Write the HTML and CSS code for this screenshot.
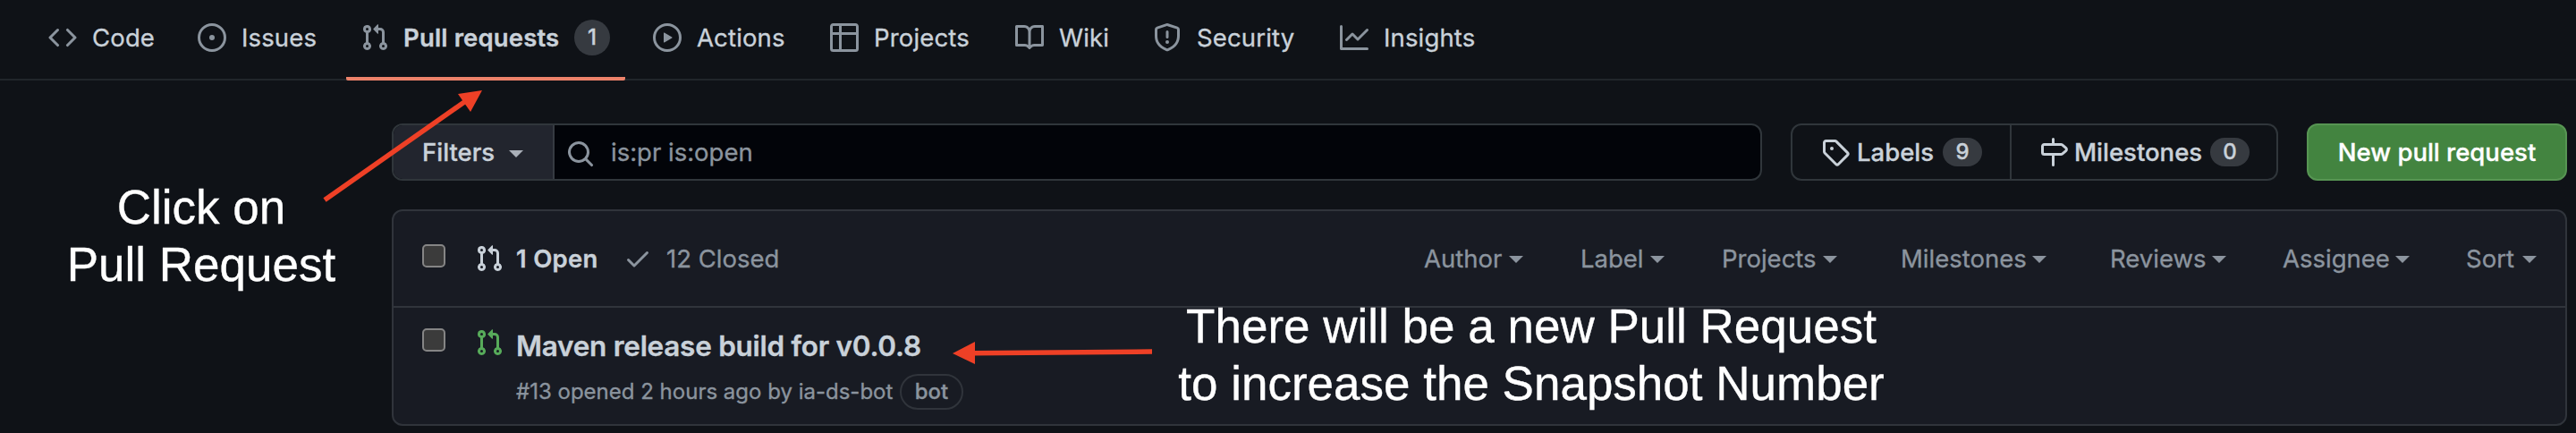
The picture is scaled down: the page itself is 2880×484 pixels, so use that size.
FILE: index.html
```html
<!DOCTYPE html>
<html lang="en">
<head>
<meta charset="utf-8">
<title>Pull requests</title>
<link rel="stylesheet" href="styles.css">
</head>
<body>
<svg class="defs" width="0" height="0" aria-hidden="true">
  <symbol id="pr" viewBox="0 0 16 16"><path fill-rule="evenodd" d="M7.177 3.073L9.573.677A.25.25 0 0110 .854v4.792a.25.25 0 01-.427.177L7.177 3.427a.25.25 0 010-.354zM3.75 2.5a.75.75 0 100 1.5.75.75 0 000-1.5zm-2.25.75a2.25 2.25 0 113 2.122v5.256a2.251 2.251 0 11-1.5 0V5.372A2.25 2.25 0 011.5 3.25zM11 2.5h-1V4h1a1 1 0 011 1v5.628a2.251 2.251 0 101.5 0V5A2.5 2.5 0 0011 2.5zm1 10.25a.75.75 0 111.5 0 .75.75 0 01-1.5 0zM3.75 12a.75.75 0 100 1.5.75.75 0 000-1.5z"/></symbol>
</svg>
<nav class="tabs">
  <a class="tab code"><svg class="icon" viewBox="0 0 16 16"><path fill-rule="evenodd" d="M4.72 3.22a.75.75 0 011.06 1.06L2.06 8l3.72 3.72a.75.75 0 11-1.06 1.06L.47 8.53a.75.75 0 010-1.06l4.25-4.25zm6.56 0a.75.75 0 10-1.06 1.06L13.94 8l-3.72 3.72a.75.75 0 101.06 1.06l4.25-4.25a.75.75 0 000-1.06l-4.25-4.25z"/></svg><span>Code</span></a>
  <a class="tab issues"><svg class="icon" viewBox="0 0 16 16"><path d="M8 9.5a1.5 1.5 0 100-3 1.5 1.5 0 000 3z"/><path fill-rule="evenodd" d="M8 0a8 8 0 100 16A8 8 0 008 0zM1.5 8a6.5 6.5 0 1113 0 6.5 6.5 0 01-13 0z"/></svg><span>Issues</span></a>
  <a class="tab pulls selected"><svg class="icon"><use href="#pr"/></svg><span>Pull requests</span><b class="count">1</b></a>
  <a class="tab actions"><svg class="icon" viewBox="0 0 16 16"><path fill-rule="evenodd" d="M1.5 8a6.5 6.5 0 1113 0 6.5 6.5 0 01-13 0zM8 0a8 8 0 100 16A8 8 0 008 0zM6.379 5.227A.25.25 0 006 5.442v5.117a.25.25 0 00.379.214l4.264-2.559a.25.25 0 000-.428L6.379 5.227z"/></svg><span>Actions</span></a>
  <a class="tab projects"><svg class="icon" viewBox="0 0 16 16"><path fill-rule="evenodd" d="M0 1.75C0 .784.784 0 1.75 0h12.5C15.216 0 16 .784 16 1.75v12.5A1.75 1.75 0 0114.25 16H1.75A1.75 1.75 0 010 14.250V1.75zM1.5 6.5v7.750c0 .138.112.250.250.250H5v-8H1.500zM5 5H1.500V1.750a.250.250 0 01.250-.250H5V5zm1.500 1.500v8h7.750a.250.250 0 00.250-.250V6.500h-8zm8-1.500h-8V1.500h7.750a.250.250 0 01.250.250V5z"/></svg><span>Projects</span></a>
  <a class="tab wiki"><svg class="icon" viewBox="0 0 16 16"><path fill-rule="evenodd" d="M0 1.750A.750.750 0 01.750 1h4.253c1.227 0 2.317.590 3 1.501A3.744 3.744 0 0111.006 1h4.245a.750.750 0 01.750.750v10.500a.750.750 0 01-.750.750h-4.507a2.250 2.250 0 00-1.591.659l-.622.621a.750.750 0 01-1.060 0l-.622-.621A2.250 2.250 0 005.258 13H.750a.750.750 0 01-.750-.750V1.750zm8.755 3a2.250 2.250 0 012.250-2.250H14.500v9h-3.757c-.710 0-1.400.201-1.992.572l.004-7.322zm-1.504 7.324l.004-5.073-.002-2.253A2.250 2.250 0 005.003 2.500H1.500v9h3.757a3.750 3.750 0 011.994.574z"/></svg><span>Wiki</span></a>
  <a class="tab security"><svg class="icon" viewBox="0 0 16 16"><path fill-rule="evenodd" d="M7.467.133a1.750 1.750 0 011.066 0l5.250 1.680A1.750 1.750 0 0115 3.480V7c0 1.566-.320 3.182-1.303 4.682-.983 1.498-2.585 2.813-5.032 3.855a1.700 1.700 0 01-1.330 0c-2.447-1.042-4.049-2.357-5.032-3.855C1.320 10.182 1 8.566 1 7V3.480a1.750 1.750 0 011.217-1.667l5.250-1.680zm.610 1.429a.250.250 0 00-.153 0l-5.250 1.680a.250.250 0 00-.174.238V7c0 1.358.275 2.666 1.057 3.860.784 1.194 2.121 2.340 4.366 3.297a.200.200 0 00.154 0c2.245-.956 3.582-2.104 4.366-3.298C13.225 9.666 13.500 8.360 13.500 7V3.480a.250.250 0 00-.174-.237l-5.250-1.680zM8.750 4.750a.750.750 0 00-1.500 0v3a.750.750 0 001.500 0v-3zM9 10.500a1 1 0 11-2 0 1 1 0 012 0z"/></svg><span>Security</span></a>
  <a class="tab insights"><svg class="icon" viewBox="0 0 16 16"><path fill-rule="evenodd" d="M1.500 1.750a.750.750 0 00-1.500 0v12.500c0 .414.336.750.750.750h14.500a.750.750 0 000-1.500H1.500V1.750zm14.280 2.530a.750.750 0 00-1.060-1.060L10 7.940 7.530 5.470a.750.750 0 00-1.060 0L3.220 8.720a.750.750 0 001.060 1.060L7 7.060l2.470 2.470a.750.750 0 001.060 0l5.250-5.250z"/></svg><span>Insights</span></a>
</nav>

<main class="content">
  <div class="toolbar">
    <div class="search">
      <button class="filters"><span>Filters</span><i class="caret"></i></button>
      <div class="query"><svg class="icon" viewBox="0 0 16 16"><path fill-rule="evenodd" d="M11.500 7a4.499 4.499 0 11-8.998 0A4.499 4.499 0 0111.500 7zm-.820 4.740a6 6 0 111.060-1.060l3.040 3.040a.750.750 0 11-1.060 1.060l-3.040-3.040z"/></svg><span>is:pr is:open</span></div>
    </div>
    <div class="links">
      <a class="link labels"><svg class="icon" viewBox="0 0 16 16"><path fill-rule="evenodd" d="M2.500 7.775V2.750a.250.250 0 01.250-.250h5.025a.250.250 0 01.177.073l6.250 6.250a.250.250 0 010 .354l-5.025 5.025a.250.250 0 01-.354 0l-6.250-6.250a.250.250 0 01-.073-.177zm-1.500 0V2.750C1 1.784 1.784 1 2.750 1h5.025c.464 0 .910.184 1.238.513l6.250 6.250a1.750 1.750 0 010 2.474l-5.026 5.026a1.750 1.750 0 01-2.474 0l-6.250-6.250A1.750 1.750 0 011 7.775zM6 5a1 1 0 100 2 1 1 0 000-2z"/></svg><span>Labels</span><b class="count small">9</b></a>
      <a class="link milestones"><svg class="icon" viewBox="0 0 16 16"><path fill-rule="evenodd" d="M7.750 0a.750.750 0 01.750.750V3h3.634c.414 0 .814.147 1.130.414l2.070 1.750a1.750 1.750 0 010 2.672l-2.070 1.750a1.750 1.750 0 01-1.130.414H8.500v5.250a.750.750 0 11-1.500 0V10H2.750A1.750 1.750 0 011 8.250v-3.500C1 3.784 1.784 3 2.750 3H7V.750A.750.750 0 017.750 0zm0 8.500h4.384a.250.250 0 00.161-.060l2.070-1.750a.250.250 0 000-.380l-2.070-1.750a.250.250 0 00-.161-.060H2.750a.250.250 0 00-.250.250v3.500c0 .138.112.250.250.250h5z"/></svg><span>Milestones</span><b class="count small">0</b></a>
    </div>
    <button class="new"><span>New pull request</span></button>
  </div>

  <section class="list">
    <header class="list-head">
      <i class="check"></i>
      <svg class="icon light"><use href="#pr"/></svg>
      <span class="open">1 Open</span>
      <svg class="icon tick" viewBox="0 0 16 16"><path fill-rule="evenodd" d="M13.780 4.220a.750.750 0 010 1.060l-7.250 7.250a.750.750 0 01-1.060 0L2.220 9.280a.750.750 0 011.060-1.060L6 10.940l6.720-6.720a.750.750 0 011.060 0z"/></svg>
      <span class="closed">12 Closed</span>
      <div class="menus">
        <span class="menu author"><span>Author</span><i class="caret"></i></span>
        <span class="menu label"><span>Label</span><i class="caret"></i></span>
        <span class="menu project"><span>Projects</span><i class="caret"></i></span>
        <span class="menu miles"><span>Milestones</span><i class="caret"></i></span>
        <span class="menu reviews"><span>Reviews</span><i class="caret"></i></span>
        <span class="menu assignee"><span>Assignee</span><i class="caret"></i></span>
        <span class="menu sort"><span>Sort</span><i class="caret"></i></span>
      </div>
    </header>
    <article class="row">
      <i class="check"></i>
      <svg class="icon green"><use href="#pr"/></svg>
      <div class="detail">
        <h3 class="title">Maven release build for v0.0.8</h3>
        <p class="meta"><span class="by">#13 opened 2 hours ago by ia-ds-bot</span><span class="bot">bot</span></p>
      </div>
    </article>
  </section>
</main>

<svg class="arrows" viewBox="0 0 2880 484">
  <path d="M363 223.500L522 112" class="shaft"/>
  <path d="M539 101L512 105L526 125Z" class="head"/>
  <path d="M1288 393L1088 394.700" class="shaft"/>
  <path d="M1065 395L1090 382V407Z" class="head"/>
</svg>
<p class="note note-click">Click on<br>Pull Request</p>
<p class="note note-new">There will be a new Pull Request<br>to increase the Snapshot Number</p>
</body>
</html>
```
FILE: styles.css
```css
* { box-sizing: border-box; }
body {
  margin: 0;
  width: 2880px;
  height: 484px;
  overflow: hidden;
  position: relative;
  background: #0f1217;
  color: #c9d1d9;
  font: 400 27.5px/42px Inter, "Noto Sans", sans-serif;
  -webkit-text-stroke: 0.35px currentColor;
  white-space: nowrap;
}
.defs { position: absolute; }
.icon { display: block; flex: none; width: 32px; height: 32px; fill: #8b949e; }
.caret {
  flex: none;
  width: 0;
  height: 0;
  border: 8px solid transparent;
  border-top-color: currentColor;
  border-bottom: 0;
}
.count {
  display: flex;
  align-items: center;
  justify-content: center;
  width: 40px;
  height: 40px;
  border-radius: 20px;
  background: #363a40;
  font-size: 24px;
  font-weight: 500;
}
.count.small { width: 44px; height: 32px; border-radius: 16px; margin-left: 8px; }

.tabs {
  display: flex;
  height: 90px;
  padding-left: 38px;
  border-bottom: 2px solid #21262b;
  letter-spacing: 0.15px;
}
.tab { display: flex; align-items: center; height: 90px; padding: 0 0 6px 16px; flex: none; }
.tab .icon { margin-right: 17px; }
.code { width: 167px; }
.issues { width: 182px; }
.pulls { width: 312px; margin-right: 15px; border-bottom: 4px solid #ec826a; padding-bottom: 2px; border-radius: 2px; }
.pulls .icon { margin-right: 16px; }
.pulls span { font-weight: 600; width: 191px; }
.actions { width: 198px; }
.projects { width: 207px; }
.wiki { width: 154px; }
.security { width: 209px; }

.content { padding: 48px 10px 0 438px; }
.toolbar { display: flex; height: 64px; }
.search {
  display: flex;
  width: 1532px;
  margin-right: 32px;
  border: 2px solid #30363b;
  border-radius: 12px;
  background: #020409;
  overflow: hidden;
}
button { font: inherit; color: inherit; margin: 0; }
.filters {
  display: flex;
  align-items: center;
  width: 180px;
  padding: 0 0 0 32px;
  border: 0;
  border-right: 2px solid #363b42;
  background: #22252e;
  font-weight: 500;
}
.filters span { width: 97px; text-align: left; }
.filters .caret { color: #a9afb8; margin-top: 4px; }
.query { display: flex; align-items: center; padding-left: 13px; color: #8b949e; }
.query .icon { margin: 4px 18px 0 0; }
.links {
  display: flex;
  width: 545px;
  margin-right: 32px;
  border: 2px solid #30363b;
  border-radius: 12px;
  font-weight: 500;
}
.link { display: flex; align-items: center; }
.link .icon { fill: #c9d1d9; margin-right: 7px; }
.labels { width: 245px; padding-left: 32px; border-right: 2px solid #30363b; }
.labels .icon { margin-right: 8px; }
.milestones { padding-left: 31px; }
.labels span { width: 88px; }
.milestones span { width: 144px; }
.new {
  width: 291px;
  padding: 0;
  border: 2px solid #579553;
  border-radius: 12px;
  background: #438440;
  color: #fff;
  font-weight: 500;
}

.list {
  height: 242px;
  margin-top: 32px;
  border: 2px solid #30343b;
  border-radius: 12px;
  background: #181b23;
}
.list-head {
  display: flex;
  align-items: center;
  height: 108px;
  padding: 0 32px 0 32px;
  border-bottom: 2px solid #30343b;
}
.check {
  flex: none;
  width: 26px;
  height: 26px;
  border: 2px solid #858585;
  border-radius: 5px;
  background: #3b3b3b;
}
.list-head .check { margin: 0 33px 6px 0; }
.light { fill: #c9d1d9; }
.green { fill: #57ab5a; }
.open { font-weight: 600; margin-left: 14px; width: 120px; letter-spacing: 0.3px; }
.tick { margin-left: 0; }
.closed { margin-left: 16px; color: #8b949e; }
.menus { display: flex; margin-left: auto; color: #8b949e; }
.menu { display: flex; align-items: center; justify-content: space-between; }
.menu .caret { margin-top: 2px; }
.author { width: 111px; margin-right: 64px; }
.label { width: 94px; margin-right: 64px; }
.project { width: 129px; margin-right: 71px; }
.miles { width: 163px; margin-right: 71px; }
.reviews { width: 130px; margin-right: 63px; }
.assignee { width: 142px; margin-right: 63px; }
.sort { width: 79px; }

.row { display: flex; padding: 22px 32px; }
.row .check { margin: 1px 33px 0 0; }
.row .icon { margin: 1px 14px 0 0; }
.title { margin: 0; font-size: 31.500px; font-weight: 600; line-height: 42px; letter-spacing: -0.27px; }
.meta { display: flex; align-items: center; margin: 10px 0 0; height: 40px; font-size: 24px; color: #8b949e; }
.by { width: 429px; }
.bot {
  display: flex;
  align-items: center;
  justify-content: center;
  width: 71px;
  height: 40px;
  border: 2px solid #30343b;
  border-radius: 20px;
  font-weight: 500;
}

.arrows { position: absolute; left: 0; top: 0; width: 2880px; height: 484px; }
.shaft { stroke: #ee4026; stroke-width: 5.500px; fill: none; }
.head { fill: #ee4026; }
.note {
  position: absolute;
  margin: 0;
  color: #fff;
  font: 400 53px/64px "Liberation Sans", Arial, sans-serif;
  text-align: center;
}
.note-click { left: 25px; top: 200px; width: 400px; }
.note-new { left: 1262px; top: 333px; width: 900px; }
```
